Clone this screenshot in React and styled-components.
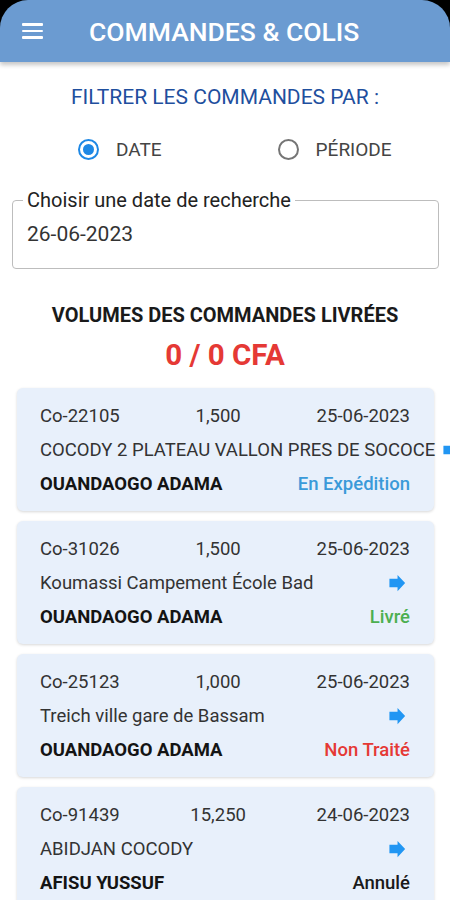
import React, {useState} from "react";
import styled, {createGlobalStyle} from 'styled-components';

const GlobalStyle = createGlobalStyle`
    * { box-sizing: border-box; }
    body {
        margin: 0;
        background: #ffffff;
        font-family: Roboto, "Noto Sans", Arial, sans-serif;
        width: 450px;
        height: 900px;
        overflow: hidden;
    }
`

const Screen = styled.div`
    width: 450px;
    height: 900px;
    overflow: hidden;
    background: #ffffff;
`

const HeaderFrame = styled.div`
    background: #000;
`

const Header = styled.header`
    height: 62px;
    background: #6b9bd1;
    border-radius: 28px 28px 0 0;
    display: flex;
    align-items: center;
    padding-left: 22px;
    box-shadow: 0 3px 4px rgba(0, 0, 0, 0.22);
    position: relative;
    z-index: 1;
`

const Burger = styled.div`
    width: 21px;
    display: flex;
    flex-direction: column;
    gap: 4px;
    margin-right: 46px;
    span {
        display: block;
        height: 2.4px;
        background: #fff;
        border-radius: 1px;
    }
`

const HeaderTitle = styled.h1`
    margin: 0;
    color: #fff;
    font-size: 26.5px;
    font-weight: 500;
`

const FilterTitle = styled.h2`
    margin: 22px 0 0;
    text-align: center;
    color: #1f4f9e;
    font-size: 21px;
    font-weight: 400;
    line-height: 26px;
`

const RadioRow = styled.div`
    display: flex;
    margin-top: 26px;
    height: 26px;
    align-items: center;
`

const RadioOption = styled.label`
    display: flex;
    align-items: center;
    gap: 17px;
    margin-left: ${p => p.offset}px;
    color: #444;
    font-size: 19px;
    cursor: pointer;
`

const RadioCircle = styled.span`
    width: 21px;
    height: 21px;
    border-radius: 50%;
    border: 2px solid ${p => p.checked ? '#1e88e5' : '#757575'};
    display: flex;
    align-items: center;
    justify-content: center;
    &::after {
        content: '';
        width: 11px;
        height: 11px;
        border-radius: 50%;
        background: ${p => p.checked ? '#1e88e5' : 'transparent'};
    }
`

const Field = styled.fieldset`
    margin: 26px 11px 0 12px;
    padding: 0 10px 20px 10px;
    border: 1px solid #bdbdbd;
    border-radius: 4px;
    min-inline-size: 0;
`

const FieldLabel = styled.legend`
    padding: 0 4px;
    font-size: 20px;
    line-height: 24px;
    color: #222;
`

const FieldValue = styled.div`
    padding: 8px 4px 0;
    font-size: 21px;
    line-height: 28px;
    color: #333;
`

const VolumeTitle = styled.div`
    margin-top: 34px;
    text-align: center;
    font-size: 20px;
    font-weight: 700;
    color: #1a1a1a;
    line-height: 24px;
`

const VolumeAmount = styled.div`
    margin-top: 11px;
    text-align: center;
    font-size: 29.5px;
    font-weight: 700;
    color: #e53935;
    line-height: 34px;
`

const List = styled.div`
    margin: 16px 16px 0 17px;
    display: flex;
    flex-direction: column;
    gap: 10px;
`

const Card = styled.div`
    background: #e8f0fb;
    border-radius: 6px;
    padding: 11px 24px 10px 23px;
    box-shadow: 0 1px 3px rgba(0, 0, 0, 0.16);
`

const Row = styled.div`
    height: 34px;
    display: flex;
    align-items: center;
    justify-content: space-between;
    font-size: 18.5px;
    color: #333;
    white-space: nowrap;
`

const Address = styled.span`
    flex-shrink: 0;
    margin-right: 3px;
`

const Name = styled.span`
    font-weight: 700;
    color: #141414;
`

const Status = styled.span`
    font-weight: 500;
    color: ${p => p.color};
`

const ArrowIcon = () => (
    <svg width="26" height="26" viewBox="0 0 24 24" style={{flexShrink: 0}}>
        <path d="M12.5 8V4.5L19.5 12l-7 7.5V16H5V8z" fill="#2196f3" />
    </svg>
)

const orders = [
    {id: 'Co-22105', amount: '1,500', date: '25-06-2023', address: 'COCODY 2 PLATEAU VALLON PRES DE SOCOCE', name: 'OUANDAOGO ADAMA', status: 'En Expédition', color: '#3a9ad9'},
    {id: 'Co-31026', amount: '1,500', date: '25-06-2023', address: 'Koumassi Campement École Bad', name: 'OUANDAOGO ADAMA', status: 'Livré', color: '#4caf50'},
    {id: 'Co-25123', amount: '1,000', date: '25-06-2023', address: 'Treich ville gare de Bassam', name: 'OUANDAOGO ADAMA', status: 'Non Traité', color: '#e53935'},
    {id: 'Co-91439', amount: '15,250', date: '24-06-2023', address: 'ABIDJAN COCODY', name: 'AFISU YUSSUF', status: 'Annulé', color: '#1a1a1a'},
]

const App = () => {
    const [mode, setMode] = useState('date');

    return <Screen>
        <GlobalStyle />
        <HeaderFrame>
            <Header>
                <Burger><span /><span /><span /></Burger>
                <HeaderTitle>COMMANDES &amp; COLIS</HeaderTitle>
            </Header>
        </HeaderFrame>

        <FilterTitle>FILTRER LES COMMANDES PAR :</FilterTitle>
        <RadioRow>
            <RadioOption offset={78} onClick={() => setMode('date')}>
                <RadioCircle checked={mode === 'date'} />
                DATE
            </RadioOption>
            <RadioOption offset={116} onClick={() => setMode('periode')}>
                <RadioCircle checked={mode === 'periode'} />
                PÉRIODE
            </RadioOption>
        </RadioRow>

        <Field>
            <FieldLabel>Choisir une date de recherche</FieldLabel>
            <FieldValue>26-06-2023</FieldValue>
        </Field>

        <VolumeTitle>VOLUMES DES COMMANDES LIVRÉES</VolumeTitle>
        <VolumeAmount>0 / 0 CFA</VolumeAmount>

        <List>
            {orders.map(order => (
                <Card key={order.id}>
                    <Row>
                        <span>{order.id}</span>
                        <span>{order.amount}</span>
                        <span>{order.date}</span>
                    </Row>
                    <Row>
                        <Address>{order.address}</Address>
                        <ArrowIcon />
                    </Row>
                    <Row>
                        <Name>{order.name}</Name>
                        <Status color={order.color}>{order.status}</Status>
                    </Row>
                </Card>
            ))}
        </List>
    </Screen>
}

export default App;
